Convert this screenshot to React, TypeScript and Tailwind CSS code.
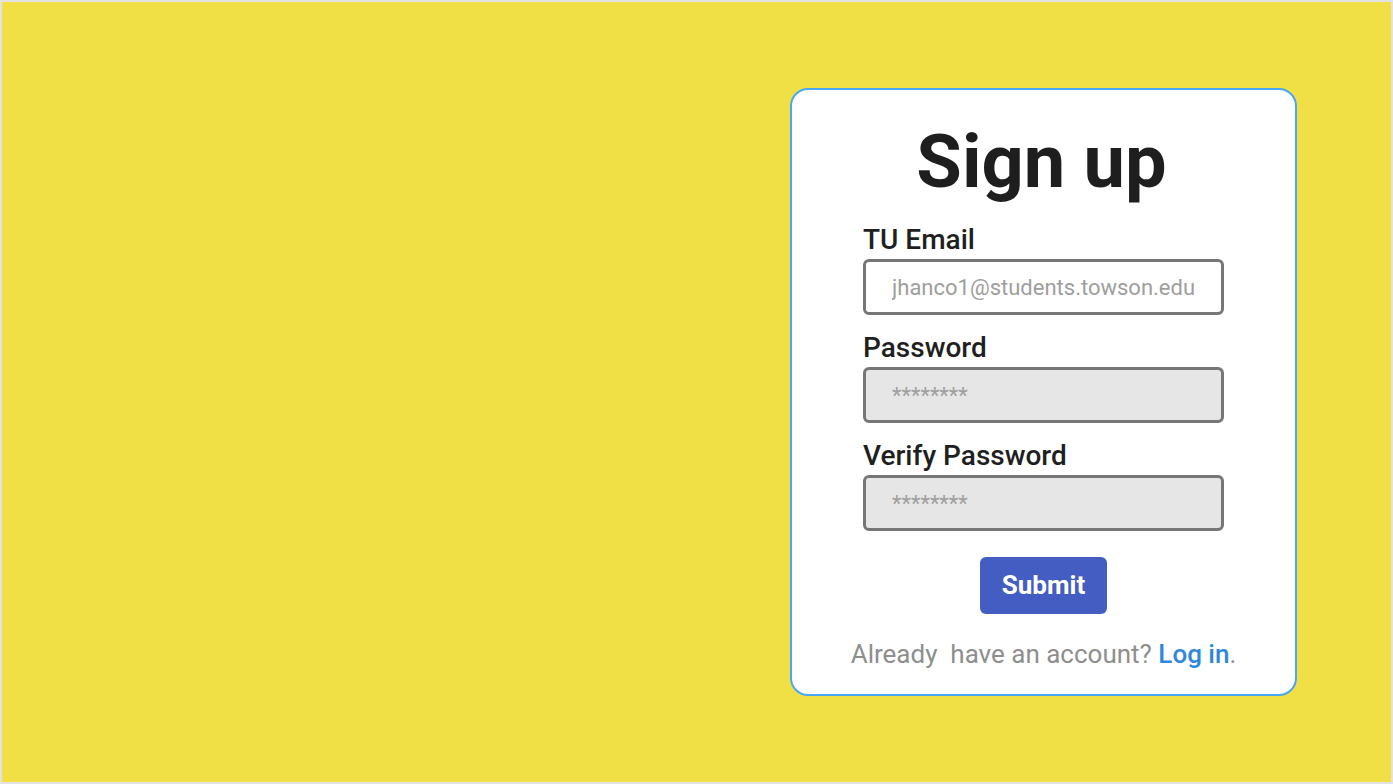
import React, { useState } from 'react';

const font = { fontFamily: 'Roboto, "Noto Sans", sans-serif' };

function Field({
  label,
  placeholder,
  type = 'text',
  filled = false,
}: {
  label: string;
  placeholder: string;
  type?: string;
  filled?: boolean;
}) {
  const [value, setValue] = useState('');
  return (
    <label className="flex flex-col gap-[5px]">
      <span className="text-[28px] font-medium leading-none text-[#1f1f1f]">{label}</span>
      <input
        type={type}
        value={value}
        onChange={(e) => setValue(e.target.value)}
        placeholder={placeholder}
        className={`h-[56px] w-full rounded-[6px] border-[3px] border-[#767676] px-[26px] text-[22px] text-[#333] outline-none placeholder:text-[#9e9e9e] ${
          filled ? 'bg-[#e6e6e6]' : 'bg-white'
        }`}
      />
    </label>
  );
}

export default function App() {
  return (
    <div
      className="flex h-screen w-full items-start justify-end border-2 border-[#e2e2e2] bg-[#f0e046] pr-[94px] pt-[86px]"
      style={font}
    >
      <div className="flex h-[608px] w-[507px] flex-col items-center rounded-[18px] border-2 border-[#4aa8f0] bg-white pt-[35px]">
        <h1 className="-ml-[4px] text-[74px] font-bold leading-none text-[#1e1e1e]">Sign up</h1>

        <form
          className="mt-[27px] flex w-[361px] flex-col"
          onSubmit={(e) => e.preventDefault()}
        >
          <Field label="TU Email" placeholder="jhanco1@students.towson.edu" />
          <div className="mt-[19px]">
            <Field label="Password" placeholder="********" type="password" filled />
          </div>
          <div className="mt-[19px]">
            <Field label="Verify Password" placeholder="********" type="password" filled />
          </div>
          <div className="mt-[26px] flex justify-center">
            <button
              type="submit"
              className="h-[57px] w-[127px] rounded-[6px] bg-[#435dc2] text-[26px] font-bold text-white"
            >
              Submit
            </button>
          </div>
        </form>

        <p className="mt-[27px] whitespace-pre text-[26px] leading-none text-[#8e8e8e]">
          {'Already  have an account? '}
          <a href="#" className="font-medium text-[#2e88dd]">
            Log in
          </a>
          .
        </p>
      </div>
    </div>
  );
}
